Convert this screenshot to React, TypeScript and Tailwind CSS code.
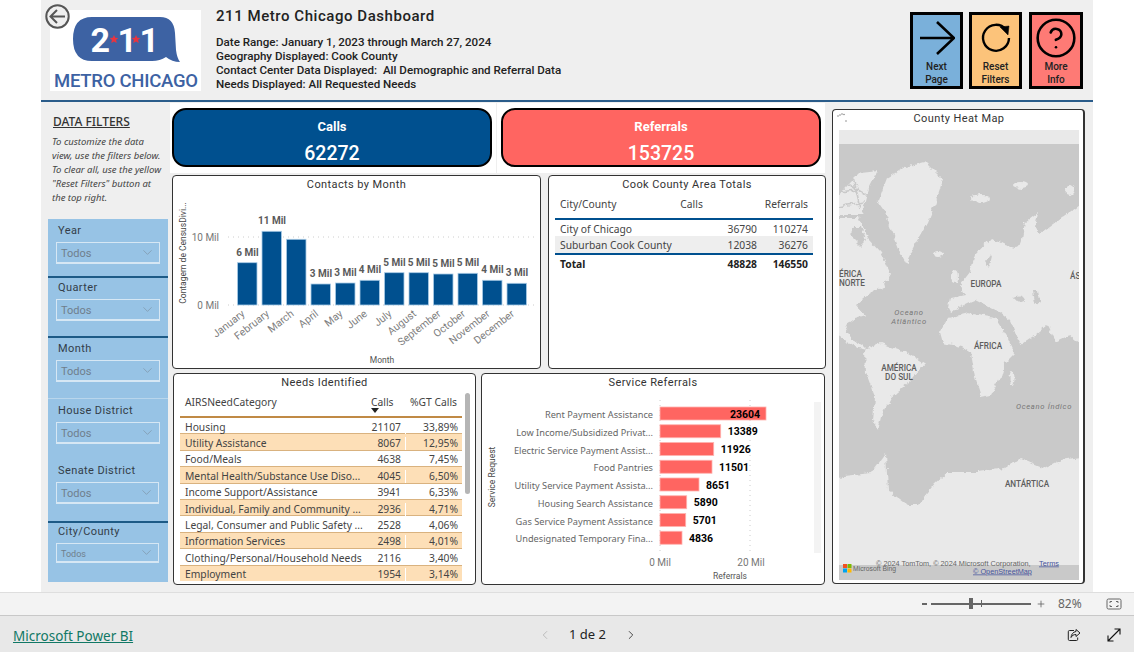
import { ChevronLeft, ChevronRight, ChevronDown, CircleHelp, Plus } from "lucide-react";

const din = "font-['Roboto',sans-serif]";
const seg = "font-['Noto_Sans',sans-serif]";

function Filter({ label, cls, ddCls, small }: { label: string; cls: string; ddCls: string; small?: boolean }) {
  return (
    <div className={`flex flex-col pl-2 ${cls}`}>
      <div className={`${din} h-[14px] pl-[2px] text-[11px] leading-[14px] tracking-[0.4px] text-[#333d48]`}>{label}</div>
      <div className={`mt-[4px] flex items-center justify-between border border-b-2 border-[#d6e7f4] pl-[4px] pr-[4px] ${ddCls}`}>
        <span className={`${din} ${small ? "text-[9px]" : "text-[11px]"} pt-[3px] leading-[14px] text-[#6f7e8c]`}>Todos</span>
        <ChevronDown size={15} strokeWidth={1} className="text-[#7a8f9f]" />
      </div>
    </div>
  );
}

function Card({ cls, title, children }: { cls: string; title: string; children: React.ReactNode }) {
  return (
    <div className={`flex flex-col overflow-hidden rounded-[4px] border border-[#333] bg-white ${cls}`}>
      <div className={`${din} h-[15px] pt-[2px] text-center text-[11px] leading-[14px] tracking-[0.4px] text-[#333]`}>{title}</div>
      {children}
    </div>
  );
}

const months = [
  ["January", 262.7, "6 Mil"],
  ["February", 231.3, "11 Mil"],
  ["March", 239.3, ""],
  ["April", 284, "3 Mil"],
  ["May", 283, "3 Mil"],
  ["June", 280.3, "4 Mil"],
  ["July", 272.7, "5 Mil"],
  ["August", 272.7, "5 Mil"],
  ["September", 274, "5 Mil"],
  ["October", 273.3, "5 Mil"],
  ["November", 280.3, "4 Mil"],
  ["December", 283.3, "3 Mil"],
] as const;

function ContactsChart() {
  return (
    <svg viewBox="173 191 367 177" width={367} height={177} className={din}>
      <text transform="translate(185.5 253) rotate(-90)" textAnchor="middle" fontSize="8.5" fill="#444">Contagem de CensusDivi...</text>
      <text x="219" y="241" textAnchor="end" fontSize="10" fill="#777">10 Mil</text>
      <text x="219" y="309" textAnchor="end" fontSize="10" fill="#777">0 Mil</text>
      <line x1="228" x2="535" y1="237" y2="237" stroke="#ccc" strokeDasharray="1 4" />
      <line x1="228" x2="535" y1="305" y2="305" stroke="#ccc" strokeDasharray="1 4" />
      {months.map(([m, top, lab], i) => {
        const x = 237.5 + i * 24.5;
        return (
          <g key={m}>
            <rect x={x} y={top} width={19.5} height={305 - top} fill="#00508f" stroke="#a9cbe6" strokeWidth="0.8" />
            {lab && <text x={x + 10} y={top - 7} textAnchor="middle" fontSize="10" fontWeight="700" fill="#5a5a5a">{lab}</text>}
            <text transform={`translate(${x + 8} 315) rotate(-38)`} textAnchor="end" fontSize="10.5" fill="#808080">{m}</text>
          </g>
        );
      })}
      <text x="382" y="363" textAnchor="middle" fontSize="8.5" fill="#555">Month</text>
    </svg>
  );
}

const refs: [string, number, number][] = [
  ["Rent Payment Assistance", 766, 23604],
  ["Low Income/Subsidized Privat...", 720.7, 13389],
  ["Electric Service Payment Assist...", 713.7, 11926],
  ["Food Pantries", 712, 11501],
  ["Utility Service Payment Assista...", 699, 8651],
  ["Housing Search Assistance", 686.7, 5890],
  ["Gas Service Payment Assistance", 685.7, 5701],
  ["Undesignated Temporary Fina...", 682, 4836],
];

function ServiceChart() {
  return (
    <svg viewBox="482 389 342 195" width={342} height={195}>
      <rect x="814" y="402" width="7" height="151" fill="#f3f3f3" />
      <line x1="660" x2="660" y1="400" y2="551" stroke="#ccc" strokeDasharray="1 4" />
      <line x1="750" x2="750" y1="400" y2="551" stroke="#ccc" strokeDasharray="1 4" />
      <text transform="translate(495 477) rotate(-90)" textAnchor="middle" fontSize="8.5" fill="#444" className={din}>Service Request</text>
      {refs.map(([n, end, v], i) => {
        const y = 407 + i * 17.75;
        return (
          <g key={n}>
            <text x="653" y={y + 11} textAnchor="end" fontSize="9.2" fill="#666" className={seg}>{n}</text>
            <rect x="660" y={y} width={end - 660} height="13" fill="#ff6561" stroke="#ffb3b0" strokeWidth="0.8" />
            <text x={i === 0 ? 760 : end + 7} y={y + 10.5} textAnchor={i === 0 ? "end" : "start"} fontSize="10.5" fontWeight="700" fill="#000" className={din}>{v}</text>
          </g>
        );
      })}
      <text x="660" y="566" textAnchor="middle" fontSize="10" fill="#777" className={din}>0 Mil</text>
      <text x="751" y="566" textAnchor="middle" fontSize="10" fill="#777" className={din}>20 Mil</text>
      <text x="730" y="579" textAnchor="middle" fontSize="8.5" fill="#555" className={din}>Referrals</text>
    </svg>
  );
}

const needs = [
  ["Housing", "21107", "33,89%"],
  ["Utility Assistance", "8067", "12,95%"],
  ["Food/Meals", "4638", "7,45%"],
  ["Mental Health/Substance Use Diso...", "4045", "6,50%"],
  ["Income Support/Assistance", "3941", "6,33%"],
  ["Individual, Family and Community ...", "2936", "4,71%"],
  ["Legal, Consumer and Public Safety ...", "2528", "4,06%"],
  ["Information Services", "2498", "4,01%"],
  ["Clothing/Personal/Household Needs", "2116", "3,40%"],
  ["Employment", "1954", "3,14%"],
];

function WorldMap() {
  return (
    <svg viewBox="839 130 240 450" width={240} height={450} className={din}>
      <defs>
        <filter id="rough" x="-5%" y="-5%" width="110%" height="110%" colorInterpolationFilters="sRGB">
          <feTurbulence type="fractalNoise" baseFrequency="0.16" numOctaves="4" seed="7" />
          <feDisplacementMap in="SourceGraphic" scale="6" xChannelSelector="R" yChannelSelector="G" />
        </filter>
      </defs>
      <rect x="839" y="130" width="240" height="450" fill="#c9c9c9" />
      <g fill="#e9e9e9" filter="url(#rough)">
        <path d="M878 202L887 178 905 167 925 162 943 180 935 205 928 222 915 245 906 263 900 252 891 228 885 212Z" />
        <path d="M836 198L848 185 861 172 878 170 868 190 862 215 836 215Z" />
        <path d="M836 218L859 218 868 238 881 252 891 275 883 287 868 295 856 305 865 315 855 318 845 325 852 340 862 345 867 350 855 347 845 341 836 335Z" />
        <path d="M865 350L881 343 908 353 925 363 908 383 891 397 881 417 878 430 873 420 875 397 866 373Z" />
        <path d="M940 332L948 318 968 313 995 318 1008 338 1015 353 1005 363 1001 377 991 395 981 397 975 377 971 353 961 347 943 343Z" />
        <path d="M948 308L950 298 965 295 960 285 970 272 975 255 991 238 1005 245 1015 248 1021 245 1025 222 1038 212 1035 228 1041 233 1061 218 1082 203 1082 345 1070 335 1055 342 1047 325 1035 335 1020 345 1010 320 1000 312 985 305 975 300 968 303 950 312Z" />
        <path d="M836 477L871 473 886 453 887 473 888 490 908 505 918 505 935 483 948 472 978 472 1005 468 1021 458 1045 468 1061 460 1082 457 1082 570 836 570Z" />
        <ellipse cx="938" cy="254" rx="5" ry="3" />
        <ellipse cx="981" cy="199" rx="9" ry="5" />
        <ellipse cx="1021" cy="185" rx="7" ry="3" />
        <ellipse cx="1070" cy="190" rx="5" ry="5" />
        <ellipse cx="955" cy="277" rx="3" ry="6" />
        <ellipse cx="1012" cy="378" rx="2.5" ry="7" />
        <path d="M845 182L868 196M852 172L860 208M838 207L864 202M838 192L858 190" fill="none" stroke="#c9c9c9" strokeWidth="1.6" />
      </g>
      <rect x="839" y="130" width="240" height="14" fill="#e9e9e9" />
      <g fill="#c9c9c9" filter="url(#rough)">
        <path d="M853 226L861 226 866 240 860 246 852 238Z" />
        <path d="M1013 297Q1022 293 1025 300 1018 304 1013 297Z" />
        <path d="M1033 290l5 0 2 11-5 3Z" />
        <path d="M985 262l6-8 1 2-3 12Z" />
      </g>
      <rect x="839" y="565" width="240" height="15" fill="#c9c9c9" />
      <g fontSize="8.2" fill="#5d5d5d" fontWeight="500">
        <text x="839" y="277">ÉRICA</text>
        <text x="839" y="286">NORTE</text>
        <text x="986" y="287" textAnchor="middle">EUROPA</text>
        <text x="1070" y="279">ÁS</text>
        <text x="988" y="349" textAnchor="middle">ÁFRICA</text>
        <text x="899" y="371" textAnchor="middle">AMÉRICA</text>
        <text x="899" y="380" textAnchor="middle">DO SUL</text>
        <text x="1027" y="487" textAnchor="middle">ANTÁRTICA</text>
      </g>
      <g fontSize="7.6" fill="#777" fontStyle="italic" letterSpacing="0.7">
        <text x="909" y="315" textAnchor="middle">Oceano</text>
        <text x="909" y="324" textAnchor="middle">Atlântico</text>
        <text x="1044" y="409" textAnchor="middle">Oceano Índico</text>
      </g>
      <text x="876" y="565.5" fontSize="7.3" fill="#666" className="font-['Liberation_Sans',sans-serif]">© 2024 TomTom, © 2024 Microsoft Corporation,</text>
      <text x="1039" y="565.5" fontSize="7.3" fill="#46549c" textDecoration="underline" className="font-['Liberation_Sans',sans-serif]">Terms</text>
      <text x="973" y="573.5" fontSize="7.3" fill="#46549c" textDecoration="underline" className="font-['Liberation_Sans',sans-serif]">© OpenStreetMap</text>
      <rect x="843" y="564" width="4" height="4" fill="#f25022" />
      <rect x="847.5" y="564" width="4" height="4" fill="#7fba00" />
      <rect x="843" y="568.5" width="4" height="4" fill="#00a4ef" />
      <rect x="847.5" y="568.5" width="4" height="4" fill="#ffb900" />
      <text x="853" y="570.5" fontSize="6.8" fill="#666" className="font-['Liberation_Sans',sans-serif]">Microsoft Bing</text>
    </svg>
  );
}

function Logo() {
  return (
    <div className="relative h-[81px] w-[151px] bg-white">
      <svg viewBox="50 10 151 81" width={151} height={81} className={din}>
        <path d="M92 17H160Q174 17 175 33L176 50Q177 58 180 62 172 62 166 57 160 61 152 61H92Q73 61 73 39 73 17 92 17Z" fill="#3d62a3" />
        <text x="90.5" y="52" fontSize="34" fontWeight="700" fill="#fff">2</text>
        <text x="117.5" y="52" fontSize="34" fontWeight="700" fill="#fff">1</text>
        <text x="139.5" y="52" fontSize="34" fontWeight="700" fill="#fff">1</text>
        <path d="M114 35l1.3 2.8 3 .3-2.2 2 .7 3-2.8-1.6-2.8 1.6.7-3-2.2-2 3-.3ZM136 35l1.3 2.8 3 .3-2.2 2 .7 3-2.8-1.6-2.8 1.6.7-3-2.2-2 3-.3Z" fill="#e8343f" />
        <text x="54" y="87" fontSize="18.5" fontWeight="500" fill="#3d62a3" textLength="144" lengthAdjust="spacing">METRO CHICAGO</text>
      </svg>
    </div>
  );
}

function ActionButton({ bg, w, lines, children }: { bg: string; w: string; lines: [string, string]; children: React.ReactNode }) {
  return (
    <div className={`flex h-[77px] flex-col items-center border-[3px] border-black ${w} ${bg}`}>
      <div className="flex h-[45px] w-full shrink-0 items-center justify-center">{children}</div>
      <div className={`${din} text-center text-[10px] font-medium leading-[13px] text-[#222]`}>
        {lines[0]}
        <br />
        {lines[1]}
      </div>
    </div>
  );
}

export default function App() {
  return (
    <div className="flex h-[652px] w-[1134px] flex-col overflow-hidden bg-white">
      <div className="flex h-[592px] shrink-0 pl-[41px] pr-[41px]">
        <div className="relative flex w-[1052px] flex-col bg-[#efefef]">
          {/* Header */}
          <div className="flex h-[100px] shrink-0 pl-[9px] pt-[10px]">
            <Logo />
            <div className={`${din} ml-[15px] text-[#222]`}>
              <div className="-mt-[2px] text-[15px] font-medium leading-[16px] tracking-[0.55px]">211 Metro Chicago Dashboard</div>
              <div className="mt-[11px] whitespace-pre text-[11.6px] font-medium leading-[14px]">
                <div>Date Range: January 1, 2023 through March 27, 2024</div>
                <div>Geography Displayed: Cook County</div>
                <div>Contact Center Data Displayed:  All Demographic and Referral Data</div>
                <div>Needs Displayed: All Requested Needs</div>
              </div>
            </div>
            <div className="ml-auto mr-[10px] mt-[2px] flex">
              <ActionButton bg="bg-[#7ab0da]" w="w-[53px]" lines={["Next", "Page"]}>
                <svg width="36" height="36" viewBox="0 0 36 36" fill="none" stroke="#000" strokeWidth="2.6">
                  <path d="M1 18H35M18 2L35 18 18 34" />
                </svg>
              </ActionButton>
              <div className="w-[6px]" />
              <ActionButton bg="bg-[#fcc37a]" w="w-[53px]" lines={["Reset", "Filters"]}>
                <svg width="32" height="32" viewBox="0 0 32 32" fill="none" stroke="#000" strokeWidth="2.4">
                  <path d="M26 7.5A13 13 0 1 0 29 16" />
                  <path d="M20 5l9-1 -1 9Z" fill="#000" strokeWidth="0.5" />
                </svg>
              </ActionButton>
              <div className="w-[7px]" />
              <ActionButton bg="bg-[#fe7a75]" w="w-[54px]" lines={["More", "Info"]}>
                <CircleHelp size={44} strokeWidth={1.4} color="#000" />
              </ActionButton>
            </div>
          </div>
          <div className="h-[2px] shrink-0 bg-[#2a5c8a]" />
          {/* Back button */}
          <div className="absolute left-[4px] top-[4px]">
            <svg width="25" height="25" viewBox="0 0 25 25" fill="none" stroke="#555" strokeWidth="2">
              <circle cx="12.5" cy="12.5" r="11.2" fill="#efefef" />
              <path d="M20 12.5H6M12 6L5.5 12.5 12 19" />
            </svg>
          </div>
          {/* Body */}
          <div className="flex flex-1">
            {/* Filters */}
            <div className="flex w-[131px] shrink-0 flex-col pl-[7px]">
              <div className="h-[117px] pl-[4px] pt-[12px]">
                <div className={`${seg} pl-[1px] text-[12px] font-medium leading-[16px] text-[#333] underline`}>DATA FILTERS</div>
                <div className={`${seg} mt-[5px] whitespace-nowrap text-[9.5px] italic leading-[14px] text-[#444]`}>
                  To customize the data
                  <br />
                  view, use the filters below.
                  <br />
                  To clear all, use the yellow
                  <br />
                  "Reset Filters" button at
                  <br />
                  the top right.
                </div>
              </div>
              <div className="flex h-[363px] w-[120px] flex-col bg-[#97c3e5]">
                <Filter label="Year" cls="h-[57px] pt-[5px]" ddCls="h-[22px] w-[104px]" />
                <div className="h-[2px] bg-[#1d5a86]" />
                <Filter label="Quarter" cls="h-[58px] pt-[3px]" ddCls="h-[22px] w-[104px]" />
                <div className="h-[2px] bg-[#1d5a86]" />
                <Filter label="Month" cls="h-[60px] pt-[4px]" ddCls="h-[22px] w-[104px]" />
                <div className="h-[1px] bg-[#b9d6ec]" />
                <Filter label="House District" cls="h-[60px] pt-[5px]" ddCls="h-[22px] w-[104px]" />
                <Filter label="Senate District" cls="h-[62px] pt-[5px]" ddCls="h-[22px] w-[103px]" />
                <div className="h-[2px] bg-[#1d5a86]" />
                <Filter label="City/County" cls="h-[59px] pt-[2px]" ddCls="h-[20px] w-[103px]" small />
              </div>
            </div>
            {/* Center */}
            <div className="flex w-[654px] shrink-0 flex-col">
              <div className="-ml-[2px] mt-[1px] flex gap-[1px]">
                <div className="h-[70px] w-[326px] bg-white pl-[2px] pt-[5px]">
                  <div className="flex h-[59px] w-[320px] flex-col items-center rounded-[14px] border-2 border-black bg-[#00508f] text-white">
                    <div className={`${din} mt-[9px] text-[13px] font-bold leading-[16px]`}>Calls</div>
                    <div className={`${din} mt-[7px] text-[19.5px] font-medium leading-[24px]`}>62272</div>
                  </div>
                </div>
                <div className="h-[70px] w-[328px] bg-white pl-[4px] pt-[5px]">
                  <div className="flex h-[59px] w-[320px] flex-col items-center rounded-[14px] border-2 border-black bg-[#ff6561] text-white">
                    <div className={`${din} mt-[9px] text-[13px] font-bold leading-[16px]`}>Referrals</div>
                    <div className={`${din} mt-[7px] text-[19.5px] font-medium leading-[24px]`}>153725</div>
                  </div>
                </div>
              </div>
              <div className="mt-[2px] flex gap-[7px]">
                <Card cls="h-[194px] w-[369px]" title="Contacts by Month">
                  <ContactsChart />
                </Card>
                <Card cls="h-[194px] w-[278px]" title="Cook County Area Totals">
                  <div className={`${seg} pl-[6px] pr-[12px] text-[10.3px] text-[#444]`}>
                    <div className="flex h-[27px] items-start pl-[5px] pr-[5px] pt-[5px] leading-[16px]">
                      <span className="w-[121px]">City/County</span>
                      <span className="w-[85px]">Calls</span>
                      <span>Referrals</span>
                    </div>
                    <div className="h-[2px] bg-[#00508f]" />
                    <div className="flex h-[16px] items-center pl-[5px] pr-[5px] pt-[3px] leading-[13px]">
                      <span className="flex-1">City of Chicago</span>
                      <span className="w-[50px] text-right">36790</span>
                      <span className="w-[51px] text-right">110274</span>
                    </div>
                    <div className="flex h-[17px] items-center bg-[#eeeeee] pl-[5px] pr-[5px] pt-[1px] leading-[13px]">
                      <span className="flex-1">Suburban Cook County</span>
                      <span className="w-[50px] text-right">12038</span>
                      <span className="w-[51px] text-right">36276</span>
                    </div>
                    <div className="h-[2px] bg-[#00508f]" />
                    <div className="flex h-[16px] items-center pl-[5px] pr-[5px] pt-[2px] font-bold leading-[13px] text-[#222]">
                      <span className="flex-1">Total</span>
                      <span className="w-[50px] text-right">48828</span>
                      <span className="w-[51px] text-right">146550</span>
                    </div>
                  </div>
                </Card>
              </div>
              <div className="ml-[1px] mt-[4px] flex gap-[5px]">
                <Card cls="h-[212px] w-[303px]" title="Needs Identified">
                  <div className="relative pl-[6px]">
                    <div className={`${seg} w-[282px] text-[10.3px] text-[#444]`}>
                      <div className="flex h-[27px] pl-[5px] pt-[5px] leading-[16px]">
                        <span className="w-[186px]">AIRSNeedCategory</span>
                        <span className="relative w-[36px]">
                          Calls
                          <svg className="absolute left-[0px] top-[14px]" width="8" height="6" viewBox="0 0 8 6">
                            <path d="M0 0H8L4 5Z" fill="#222" />
                          </svg>
                        </span>
                        <span className="w-[50px] text-right">%GT Calls</span>
                      </div>
                      <div className="h-[2px] bg-[#c08a45]" />
                      <div className="h-[163px] overflow-hidden">
                        {needs.map((r, i) => (
                          <div key={r[0]} className={`flex h-[16.4px] items-center border-b border-[#d9b27f] pt-[3px] leading-[13px] ${i % 2 ? "bg-[#fddfb7]" : "bg-white"}`}>
                            <span className="w-[185px] whitespace-nowrap pl-[5px]">{r[0]}</span>
                            <span className="w-[40px] pr-[4px] text-right">{r[1]}</span>
                            <span className="w-[57px] border-l border-white pr-[4px] text-right">{r[2]}</span>
                          </div>
                        ))}
                      </div>
                    </div>
                    <div className="absolute left-[291px] top-[4px] h-[101px] w-[5px] rounded-[3px] bg-[#b5b5b5]" />
                  </div>
                </Card>
                <Card cls="h-[212px] w-[344px]" title="Service Referrals">
                  <ServiceChart />
                </Card>
              </div>
            </div>
            {/* Map */}
            <div className="relative ml-[6px] mt-[7px] flex h-[475px] w-[253px] flex-col rounded-[4px] border border-r-2 border-[#333] bg-white">
              <div className="flex h-[20px] items-start justify-center pl-[2px] pt-[1px]">
                <span className={`${din} text-[11px] leading-[15px] tracking-[0.4px] text-[#333]`}>County Heat Map</span>
              </div>
              <div className="pl-[6px]">
                <WorldMap />
              </div>
              <svg className="absolute left-[4px] top-[2px]" width="12" height="12" viewBox="0 0 12 12" fill="#888">
                <circle cx="1" cy="4" r="0.8" /><circle cx="3" cy="3" r="0.8" /><circle cx="5" cy="2" r="0.8" /><circle cx="7" cy="2.5" r="0.8" /><circle cx="9" cy="9" r="0.8" />
              </svg>
            </div>
          </div>
        </div>
      </div>
      {/* Zoom bar */}
      <div className="flex h-[24px] shrink-0 items-center border-y border-t-[#dedede] border-b-[#c8c8c8] bg-[#f3f3f3] text-[#666]">
        <div className="ml-[922px] h-[2px] w-[5px] bg-[#666]" />
        <div className="relative ml-[4px] h-[1.5px] w-[100px] bg-[#666]">
          <div className="absolute left-[38px] top-[-5px] h-[11px] w-[4px] bg-[#666]" />
          <div className="absolute left-[50px] top-[-3px] h-[7px] w-[1px] bg-[#666]" />
        </div>
        <Plus size={10} className="ml-[5px]" strokeWidth={2} />
        <span className={`${seg} ml-[12px] text-[12px]`}>82%</span>
        <svg className="ml-[24px]" width="16" height="12" viewBox="0 0 16 12" fill="none" stroke="#666">
          <rect x="1" y="1" width="14" height="10" rx="1.5" />
          <path d="M4 5V3.5H6M10 3.5H12V5M12 7V8.5H10M6 8.5H4V7" />
        </svg>
      </div>
      {/* Footer */}
      <div className="flex flex-1 items-center bg-[#e8e8e8] pt-[2px]">
        <a className={`${seg} ml-[13px] mt-[2px] w-[120px] whitespace-nowrap text-[13.5px] leading-[18px] text-[#117865] underline`}>Microsoft Power BI</a>
        <ChevronLeft size={14} className="ml-[405px] text-[#b5b5b5]" strokeWidth={1.5} />
        <span className={`${seg} ml-[17px] w-[37px] whitespace-nowrap text-[13px] text-[#222]`}>1 de 2</span>
        <ChevronRight size={14} className="ml-[18px] text-[#333]" strokeWidth={1.5} />
        <svg className="ml-[429px]" width="14" height="14" viewBox="0 0 14 14" fill="none" stroke="#222">
          <path d="M7 2.5H2.5A1.2 1.2 0 0 0 1.3 3.7V11.3A1.2 1.2 0 0 0 2.5 12.5H9.5A1.2 1.2 0 0 0 10.7 11.3V9.5" />
          <path d="M9 1.5L13 5 9 8.5V6.5C6.5 6.5 5 7.5 4 9.5 4.2 6.5 6 4 9 3.5Z" />
        </svg>
        <svg className="ml-[26px]" width="14" height="14" viewBox="0 0 14 14" fill="none" stroke="#111" strokeWidth="1.1">
          <path d="M1 13L13 1M7.5 1H13V6.5M1 7.5V13H6.5" />
        </svg>
      </div>
    </div>
  );
}
